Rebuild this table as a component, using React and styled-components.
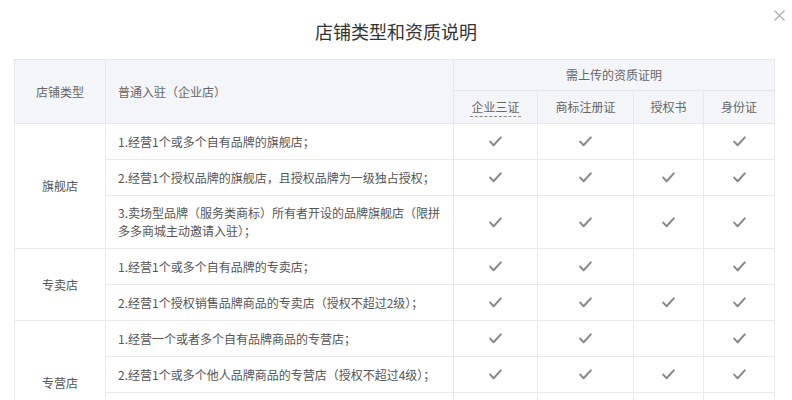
import React from "react";
import styled, { createGlobalStyle } from "styled-components";

const Global = createGlobalStyle`
  html, body { margin: 0; padding: 0; background: #fff; }
  body {
    font-family: "Noto Sans CJK SC", "Noto Sans", "Liberation Sans", sans-serif;
    overflow: hidden;
  }
`;

const Modal = styled.div`
  position: relative;
  width: 792px;
  height: 400px;
  background: #fff;
  overflow: hidden;
`;

const Title = styled.h2`
  margin: 0;
  padding-top: 19px;
  height: 24px;
  line-height: 24px;
  text-align: center;
  font-size: 18px;
  font-weight: 400;
  color: #333;
  margin-bottom: 16px;
`;

const Close = styled.button`
  position: absolute;
  top: 8px;
  right: 6px;
  width: 14px;
  height: 14px;
  padding: 0;
  border: 0;
  background: transparent;
  display: flex;
  align-items: center;
  justify-content: center;
  cursor: pointer;
`;

const Table = styled.table`
  margin-left: 14px;
  width: 760px;
  border-collapse: collapse;
  table-layout: fixed;
  font-size: 12px;
`;

const Th = styled.th`
  background: #f4f5f8;
  border: 1px solid #e6e7eb;
  color: #666;
  font-weight: 400;
  line-height: 18px;
  height: ${(p) => p.$h || 30}px;
  padding: 0 ${(p) => (p.$left ? "12px" : "4px")};
  text-align: ${(p) => (p.$left ? "left" : "center")};
  box-sizing: border-box;
`;

const Dashed = styled.span`
  display: inline-block;
  line-height: 16px;
  border-bottom: 1px dashed #888;
  padding: 0 1px 1px;
`;

const Td = styled.td`
  border: 1px solid #e8e9ec;
  color: #555;
  line-height: 18px;
  height: 36px;
  box-sizing: border-box;
  padding: ${(p) => (p.$left ? "8px 5px 8px 12px" : "8px 0")};
  text-align: ${(p) => (p.$left ? "left" : "center")};
  vertical-align: middle;
`;

const TypeCell = styled(Td)`
  text-align: center;
  color: #555;
`;

const CheckIcon = () => (
  <svg width="13" height="11" viewBox="0 0 13 11" style={{ display: "block", margin: "0 auto" }}>
    <path d="M1.2 5.6 L4.6 9.2 L11.8 1.4" fill="none" stroke="#888" strokeWidth="2" strokeLinecap="round" strokeLinejoin="round" />
  </svg>
);

const groups = [
  {
    name: "旗舰店",
    rows: [
      ["1.经营1个或多个自有品牌的旗舰店；", [1, 1, 0, 1]],
      ["2.经营1个授权品牌的旗舰店，且授权品牌为一级独占授权；", [1, 1, 1, 1]],
      ["3.卖场型品牌（服务类商标）所有者开设的品牌旗舰店（限拼多多商城主动邀请入驻）；", [1, 1, 1, 1]],
    ],
  },
  {
    name: "专卖店",
    rows: [
      ["1.经营1个或多个自有品牌的专卖店；", [1, 1, 0, 1]],
      ["2.经营1个授权销售品牌商品的专卖店（授权不超过2级）；", [1, 1, 1, 1]],
    ],
  },
  {
    name: "专营店",
    rows: [
      ["1.经营一个或者多个自有品牌商品的专营店；", [1, 1, 0, 1]],
      ["2.经营1个或多个他人品牌商品的专营店（授权不超过4级）；", [1, 1, 1, 1]],
      ["3.经营1个或多个自有品牌及1个或多个他人品牌商品的专营店（授权不超过4级）；", [1, 1, 1, 1]],
    ],
  },
];

export default function App() {
  return (
    <Modal>
      <Global />
      <Title>店铺类型和资质说明</Title>
      <Close aria-label="关闭">
        <svg width="11" height="11" viewBox="0 0 11 11">
          <path d="M0.5 0.5 L10.5 10.5 M10.5 0.5 L0.5 10.5" stroke="#aaa" strokeWidth="1.1" />
        </svg>
      </Close>
      <Table>
        <colgroup>
          <col style={{ width: 91 }} />
          <col style={{ width: 348 }} />
          <col style={{ width: 84 }} />
          <col style={{ width: 96 }} />
          <col style={{ width: 70 }} />
          <col style={{ width: 71 }} />
        </colgroup>
        <thead>
          <tr>
            <Th rowSpan={2}>店铺类型</Th>
            <Th rowSpan={2} $left>普通入驻（企业店）</Th>
            <Th colSpan={4} $h={31}>需上传的资质证明</Th>
          </tr>
          <tr>
            <Th $h={33}><Dashed>企业三证</Dashed></Th>
            <Th $h={33}>商标注册证</Th>
            <Th $h={33}>授权书</Th>
            <Th $h={33}>身份证</Th>
          </tr>
        </thead>
        <tbody>
          {groups.map((g) =>
            g.rows.map(([text, checks], i) => (
              <tr key={g.name + i}>
                {i === 0 && <TypeCell rowSpan={g.rows.length}>{g.name}</TypeCell>}
                <Td $left>{text}</Td>
                {checks.map((c, j) => (
                  <Td key={j}>{c ? <CheckIcon /> : null}</Td>
                ))}
              </tr>
            ))
          )}
        </tbody>
      </Table>
    </Modal>
  );
}
